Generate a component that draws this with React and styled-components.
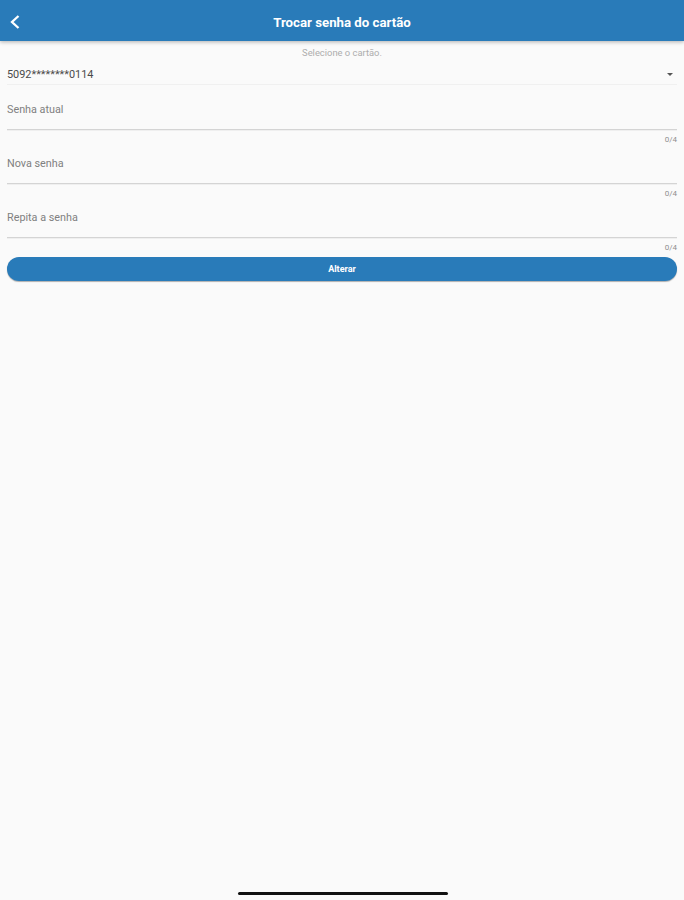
import React from "react";
import styled, { createGlobalStyle } from "styled-components";

const Global = createGlobalStyle`
  html, body {
    margin: 0;
    padding: 0;
    background: #fafafa;
  }
  * {
    box-sizing: border-box;
  }
`;

const Page = styled.div`
  height: 900px;
  display: flex;
  flex-direction: column;
  background: #fafafa;
  font-family: Roboto, "Liberation Sans", sans-serif;
`;

const AppBar = styled.header`
  height: 41px;
  flex: none;
  display: grid;
  grid-template-columns: 40px 1fr 40px;
  align-items: center;
  padding-top: 3px;
  background: #297bb9;
  box-shadow: 0 1px 4px rgba(0, 0, 0, 0.3);
  color: #fff;
`;

const BackButton = styled.div`
  display: flex;
  align-items: center;
  padding-left: 8px;
`;

const Title = styled.h1`
  margin: 0;
  text-align: center;
  font-size: 13.25px;
  font-weight: 700;
`;

const Form = styled.main`
  flex: 1;
  display: flex;
  flex-direction: column;
  padding: 0 7px;
`;

const Hint = styled.div`
  height: 22px;
  padding-top: 6px;
  text-align: center;
  font-size: 9.4px;
  line-height: 11px;
  color: #adadad;
`;

const SelectRow = styled.div`
  height: 22px;
  display: flex;
  align-items: center;
  justify-content: space-between;
  padding: 1px 4px 0 0;
  border-bottom: 1px solid #f0f0f0;
  font-size: 10.9px;
  color: #4a4a4a;
`;

const Caret = styled.span`
  width: 0;
  height: 0;
  border-left: 3px solid transparent;
  border-right: 3px solid transparent;
  border-top: 3px solid #555;
`;

const Field = styled.div`
  height: 54px;
  display: flex;
  flex-direction: column;
`;

const FieldBox = styled.div`
  height: 45px;
  flex: none;
  padding-top: 19px;
  border-bottom: 1px solid #d4d4d4;
  box-shadow: 0 1px 0 #efefef;
  font-size: 10.8px;
  line-height: 12px;
  color: #808080;
`;

const Counter = styled.div`
  padding-top: 5px;
  text-align: right;
  font-size: 8px;
  line-height: 10px;
  color: #8f8f8f;
`;

const Submit = styled.button`
  height: 24px;
  flex: none;
  width: 100%;
  margin-top: 10px;
  padding: 0;
  border: none;
  border-radius: 12px;
  background: #297bb9;
  box-shadow: 0 1px 1px rgba(0, 0, 0, 0.3);
  color: #fff;
  font-family: inherit;
  font-size: 9px;
  font-weight: 700;
`;

const HomeBar = styled.div`
  position: absolute;
  left: 238px;
  top: 892px;
  width: 210px;
  height: 3px;
  border-radius: 2px;
  background: #111;
`;

const fields = ["Senha atual", "Nova senha", "Repita a senha"];

export default function App() {
  return (
    <Page>
      <Global />
      <AppBar>
        <BackButton>
          <svg width="12" height="16" viewBox="0 0 12 16" fill="none">
            <path d="M10.5 2 L4 8 L10.5 14" stroke="#fff" strokeWidth="2.3" />
          </svg>
        </BackButton>
        <Title>Trocar senha do cartão</Title>
      </AppBar>
      <Form>
        <Hint>Selecione o cartão.</Hint>
        <SelectRow>
          <span>5092********0114</span>
          <Caret />
        </SelectRow>
        {fields.map((label) => (
          <Field key={label}>
            <FieldBox>{label}</FieldBox>
            <Counter>0/4</Counter>
          </Field>
        ))}
        <Submit>Alterar</Submit>
      </Form>
      <HomeBar />
    </Page>
  );
}
